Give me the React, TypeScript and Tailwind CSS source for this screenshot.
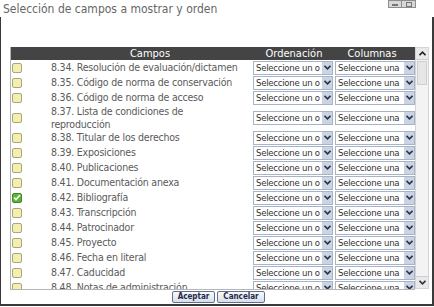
import React from "react";

type Field = {
  id: string;
  title: string;
  title2?: string;
  checked?: boolean;
};

const fields: Field[] = [
  { id: "8.34", title: "Resolución de evaluación/dictamen" },
  { id: "8.35", title: "Código de norma de conservación" },
  { id: "8.36", title: "Código de norma de acceso" },
  { id: "8.37", title: "Lista de condiciones de", title2: "reproducción" },
  { id: "8.38", title: "Titular de los derechos" },
  { id: "8.39", title: "Exposiciones" },
  { id: "8.40", title: "Publicaciones" },
  { id: "8.41", title: "Documentación anexa" },
  { id: "8.42", title: "Bibliografía", checked: true },
  { id: "8.43", title: "Transcripción" },
  { id: "8.44", title: "Patrocinador" },
  { id: "8.45", title: "Proyecto" },
  { id: "8.46", title: "Fecha en literal" },
  { id: "8.47", title: "Caducidad" },
  { id: "8.48", title: "Notas de administración" },
  { id: "8.49", title: "Observaciones" },
];

function Chevron() {
  return (
    <svg width="7" height="5" viewBox="0 0 7 5" className="block">
      <path d="M0.5 0.8 L3.5 3.8 L6.5 0.8" fill="none" stroke="#2a3348" strokeWidth="1.6" />
    </svg>
  );
}

function FakeSelect({ label }: { label: string }) {
  return (
    <div className="flex h-[14px] w-[80px] border border-[#a7b4c8] bg-white">
      <div className="flex-1 overflow-hidden whitespace-nowrap pl-[2px] text-[9.5px] leading-[12px] tracking-[-0.25px] text-[#333]">
        {label}
      </div>
      <div className="flex w-[10px] items-center justify-center bg-[#cbd4e2]">
        <Chevron />
      </div>
    </div>
  );
}

function Checkbox({ checked }: { checked?: boolean }) {
  if (checked) {
    return (
      <div className="flex h-[10px] w-[10px] items-center justify-center rounded-[2px] border border-[#3f8a24] bg-[#5bb534]">
        <svg width="8" height="7" viewBox="0 0 8 7">
          <path d="M1 3.5 L3 5.5 L7 1" fill="none" stroke="white" strokeWidth="1.6" />
        </svg>
      </div>
    );
  }
  return <div className="h-[10px] w-[10px] rounded-[2px] border border-[#aaa57c] bg-[#f3efae]" />;
}

function Row({ field }: { field: Field }) {
  return (
    <div className={`flex items-center ${field.title2 ? "h-[25px]" : "h-[15px]"}`}>
      <div className="w-[40px] pl-[1px]">
        <Checkbox checked={field.checked} />
      </div>
      <div className="w-[202px] overflow-hidden whitespace-nowrap text-[10.5px] leading-[13px] tracking-[-0.2px] text-[#5a5a5a]">
        {field.id}. {field.title}
        {field.title2 ? (
          <>
            <br />
            {field.title2}
          </>
        ) : null}
      </div>
      <div className="flex gap-[2px]">
        <FakeSelect label="Seleccione un o" />
        <FakeSelect label="Seleccione una" />
      </div>
    </div>
  );
}

function ScrollBar() {
  return (
    <div className="flex h-[242px] w-[14px] flex-col border border-[#d4d4d4] bg-[#f3f3f3]">
      <div className="flex h-[12px] items-center justify-center border-b border-[#cfcfcf] bg-[#e9e9e9]">
        <svg width="7" height="5" viewBox="0 0 7 5">
          <path d="M0.5 4.2 L3.5 1.2 L6.5 4.2" fill="none" stroke="#222" strokeWidth="1.6" />
        </svg>
      </div>
      <div className="mx-[1px] mt-[1px] h-[24px] border border-[#cfcfcf] bg-[#e6e6e6]" />
      <div className="flex-1" />
      <div className="flex h-[12px] items-center justify-center border-t border-[#cfcfcf] bg-[#e9e9e9]">
        <Chevron />
      </div>
    </div>
  );
}

function TitleButtons() {
  return (
    <div className="mr-[18px] flex">
      <div className="flex h-[8px] w-[14px] items-end justify-center border border-[#8d8d8d] bg-[#d8d8d8] pb-[1px]">
        <div className="h-[2px] w-[6px] bg-[#777]" />
      </div>
      <div className="flex h-[8px] w-[14px] items-center justify-center border border-l-0 border-[#8d8d8d] bg-[#d8d8d8]">
        <div className="h-[5px] w-[6px] border border-[#777]" />
      </div>
    </div>
  );
}

export default function App() {
  return (
    <div className="flex h-[307px] w-[434px] flex-col overflow-hidden bg-white font-['DejaVu_Sans_Condensed','DejaVu_Sans',sans-serif]">
      <div className="flex h-[17px] items-start justify-between">
        <div className="pl-[3px] pt-[2px] text-[12px] leading-[14px] text-[#666]">
          Selección de campos a mostrar y orden
        </div>
        <TitleButtons />
      </div>
      <div className="mb-[1px] flex flex-1 flex-col border-b-2 border-l border-r-2 border-[#3a3a3a] pt-[30px]">
        <div className="ml-[9px] flex">
          <div className="flex w-[405px] flex-col border-b border-l border-[#b5b5b5]">
            <div className="flex h-[13px] items-center bg-[#444] text-[11px] leading-[13px] text-white">
              <div className="w-[242px] pl-[36px] text-center">Campos</div>
              <div className="w-[82px] text-center">Ordenación</div>
              <div className="w-[74px] text-center">Columnas</div>
            </div>
            <div className="h-[229px] overflow-hidden">
              {fields.map((f) => (
                <Row key={f.id} field={f} />
              ))}
            </div>
          </div>
          <ScrollBar />
        </div>
        <div className="mt-[1px] flex justify-center gap-[2px] pl-[4px]">
          <button className="h-[12px] w-[43px] rounded-[2px] border border-[#5f6f8c] bg-gradient-to-b from-[#fafafa] to-[#d9dee7] text-[8px] font-bold leading-[10px] text-[#1c2a4e]">
            Aceptar
          </button>
          <button className="h-[12px] w-[48px] rounded-[2px] border border-[#5f6f8c] bg-gradient-to-b from-[#fafafa] to-[#d9dee7] text-[8px] font-bold leading-[10px] text-[#1c2a4e]">
            Cancelar
          </button>
        </div>
      </div>
    </div>
  );
}
